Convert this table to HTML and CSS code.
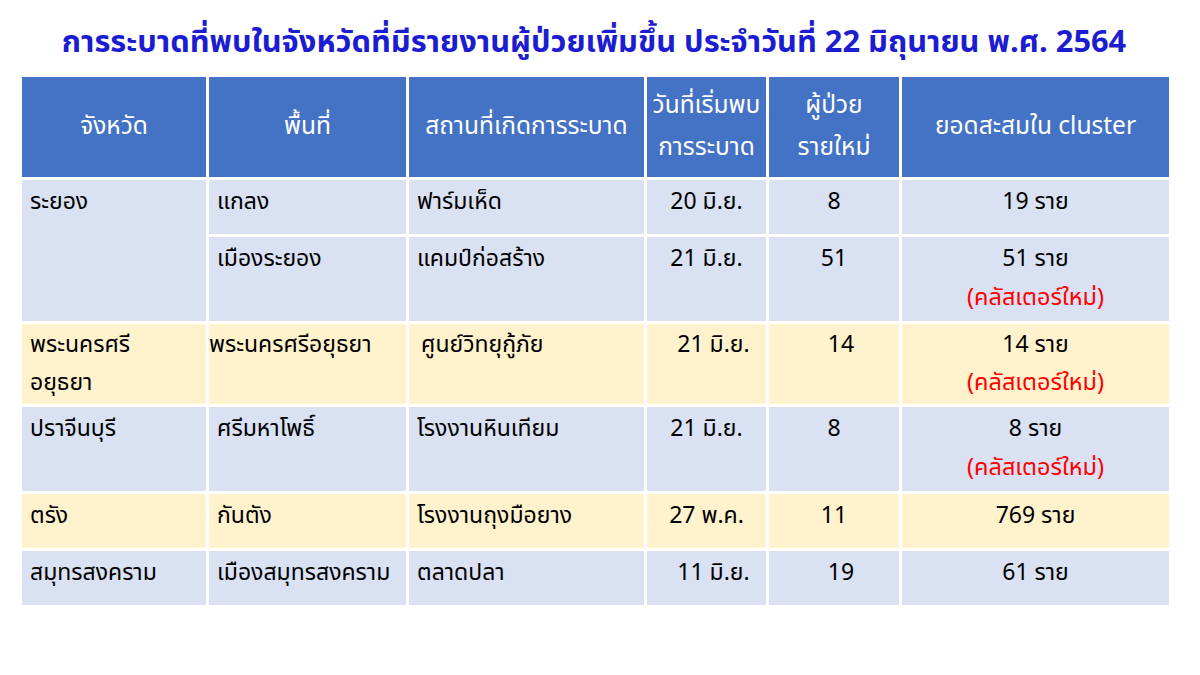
FILE: index.html
```html
<!DOCTYPE html>
<html lang="th">
<head>
<meta charset="utf-8">
<title>การระบาดที่พบในจังหวัด</title>
<link rel="stylesheet" href="styles.css">
</head>
<body>
<div class="page">
  <h1 class="title">การระบาดที่พบในจังหวัดที่มีรายงานผู้ป่วยเพิ่มขึ้น ประจำวันที่ 22 มิถุนายน พ.ศ. 2564</h1>
  <table class="grid">
    <colgroup>
      <col class="c1"><col class="c2"><col class="c3"><col class="c4"><col class="c5"><col class="c6">
    </colgroup>
    <thead>
      <tr class="head">
        <th>จังหวัด</th>
        <th>พื้นที่</th>
        <th>สถานที่เกิดการระบาด</th>
        <th class="two">วันที่เริ่มพบ<br>การระบาด</th>
        <th class="two">ผู้ป่วย<br>รายใหม่</th>
        <th>ยอดสะสมใน cluster</th>
      </tr>
    </thead>
    <tbody>
      <tr class="blue r1">
        <td rowspan="2">ระยอง</td>
        <td>แกลง</td>
        <td>ฟาร์มเห็ด</td>
        <td class="ctr">20 มิ.ย.</td>
        <td class="ctr">8</td>
        <td class="ctr">19 ราย</td>
      </tr>
      <tr class="blue r2">
        <td>เมืองระยอง</td>
        <td>แคมป์ก่อสร้าง</td>
        <td class="ctr">21 มิ.ย.</td>
        <td class="ctr">51</td>
        <td class="ctr">51 ราย<br><span class="new">(คลัสเตอร์ใหม่)</span></td>
      </tr>
      <tr class="yellow r3">
        <td>พระนครศรี<br>อยุธยา</td>
        <td class="tight">พระนครศรีอยุธยา</td>
        <td class="shift">ศูนย์วิทยุกู้ภัย</td>
        <td class="ctr shift2">21 มิ.ย.</td>
        <td class="ctr shift2">14</td>
        <td class="ctr">14 ราย<br><span class="new">(คลัสเตอร์ใหม่)</span></td>
      </tr>
      <tr class="blue r2">
        <td>ปราจีนบุรี</td>
        <td>ศรีมหาโพธิ์</td>
        <td>โรงงานหินเทียม</td>
        <td class="ctr">21 มิ.ย.</td>
        <td class="ctr">8</td>
        <td class="ctr">8 ราย<br><span class="new">(คลัสเตอร์ใหม่)</span></td>
      </tr>
      <tr class="yellow r1">
        <td>ตรัง</td>
        <td>กันตัง</td>
        <td>โรงงานถุงมือยาง</td>
        <td class="ctr">27 พ.ค.</td>
        <td class="ctr">11</td>
        <td class="ctr">769 ราย</td>
      </tr>
      <tr class="blue r1">
        <td>สมุทรสงคราม</td>
        <td>เมืองสมุทรสงคราม</td>
        <td>ตลาดปลา</td>
        <td class="ctr shift2">11 มิ.ย.</td>
        <td class="ctr shift2">19</td>
        <td class="ctr">61 ราย</td>
      </tr>
    </tbody>
  </table>
</div>
</body>
</html>
```
FILE: styles.css
```css
html, body {
  margin: 0;
  padding: 0;
  background: #ffffff;
}
body {
  font-family: "Noto Sans Thai", "Leelawadee UI", Tahoma, "Noto Sans", "DejaVu Sans", sans-serif;
  color: #000000;
}
.page {
  width: 1150px;
  padding: 19px 0 0 19px;
}
.title {
  margin: 0 0 12px 0;
  height: 46px;
  line-height: 48px;
  text-align: center;
  font-size: 30.8px;
  font-weight: bold;
  color: #1c1cd0;
  white-space: nowrap;
}
.grid {
  border-collapse: separate;
  border-spacing: 3px;
  table-layout: fixed;
  width: 1152px;
  margin-top: -3px;
}
.c1 { width: 184px; }
.c2 { width: 197px; }
.c3 { width: 235px; }
.c4 { width: 119px; }
.c5 { width: 130px; }
.c6 { width: 267px; }
.head th {
  background: #4472c4;
  color: #ffffff;
  font-weight: normal;
  font-size: 24.5px;
  height: 100px;
  padding: 0;
  text-align: center;
  vertical-align: middle;
  line-height: 42px;
  white-space: nowrap;
}
td {
  font-size: 23px;
  line-height: 39px;
  vertical-align: top;
  padding: 3px 0 0 8px;
  text-align: left;
  white-space: nowrap;
}
td.ctr {
  text-align: center;
  padding-left: 0;
}
td.tight { padding-left: 0; }
td.shift { padding-left: 12px; }
td.shift2 { padding-left: 14px; }
.blue td { background: #d9e1f2; }
.yellow td { background: #fff2cc; }
.r1 td { height: 51px; }
.r2 td { height: 81px; }
.r3 td { height: 78px; line-height: 38px; padding-top: 2px; }
.new { color: #ff0000; font-size: 23.5px; }
```
